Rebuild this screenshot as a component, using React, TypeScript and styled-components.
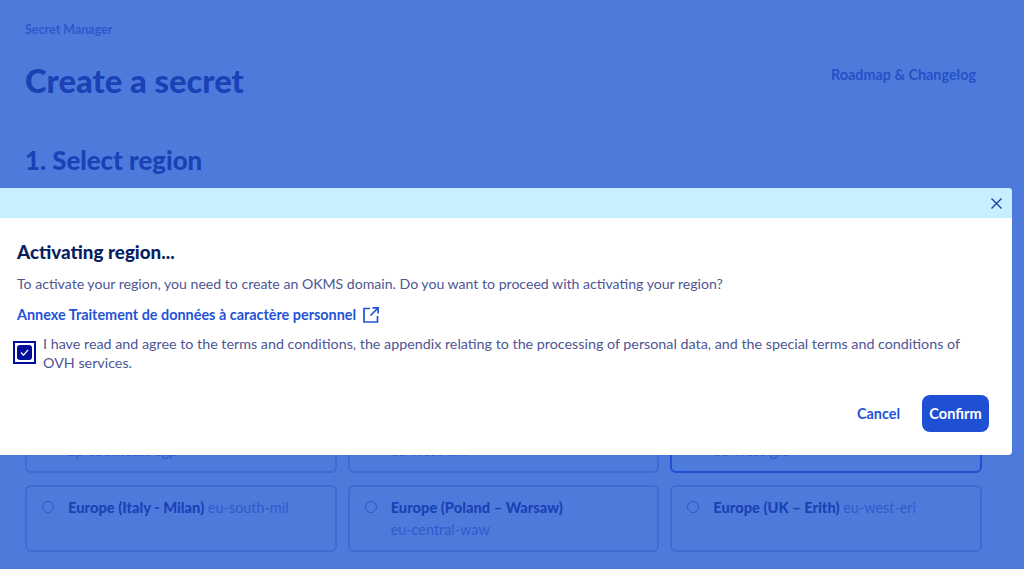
import React from "react";
import styled, { createGlobalStyle } from "styled-components";

const Global = createGlobalStyle`
  html, body { margin: 0; padding: 0; height: 100%; overflow: hidden; }
  body { background: #4e7bdb; font-family: Lato, "Noto Sans", sans-serif; }
  * { box-sizing: border-box; }
`;

const Page = styled.div`
  position: relative;
  width: 1024px;
  height: 569px;
  overflow: hidden;
  background: #4e7bdb;
`;

const Content = styled.main`
  display: flex;
  flex-direction: column;
  padding: 22px 42px 0 25px;
`;

const Breadcrumb = styled.div`
  font-size: 12.5px;
  line-height: 16px;
  font-weight: 700;
  color: #2c58cb;
`;

const TitleRow = styled.div`
  display: flex;
  justify-content: space-between;
  align-items: center;
  margin-top: 19px;
  height: 48px;
`;

const Title = styled.h1`
  margin: 0;
  font-size: 32.7px;
  line-height: 48px;
  font-weight: 900;
  color: #1b41b6;
`;

const TopLink = styled.a`
  font-size: 14.4px;
  font-weight: 700;
  color: #2650c8;
  margin: -14px 6px 0 0;
`;

const SectionTitle = styled.h2`
  margin: 39px 0 0;
  font-size: 25.8px;
  line-height: 32px;
  font-weight: 900;
  color: #1b41b6;
`;

const CardGrid = styled.div`
  display: grid;
  grid-template-columns: repeat(3, 1fr);
  grid-auto-rows: 67px;
  column-gap: 11px;
  row-gap: 12px;
  margin-top: 230px;
`;

const Card = styled.div<{ $selected?: boolean }>`
  display: grid;
  grid-template-columns: 13px 1fr;
  column-gap: 13px;
  align-content: start;
  padding: 9px 15px;
  border: 2px solid ${(p) => (p.$selected ? "#2050d6" : "#3f6bd2")};
  border-radius: 6px;
`;

const Radio = styled.span`
  width: 12px;
  height: 12px;
  margin-top: 5px;
  border: 1px solid #2c58cb;
  border-radius: 50%;
`;

const CardText = styled.div`
  font-size: 14.4px;
  line-height: 22px;
  color: #2f5acd;
`;

const CardName = styled.strong`
  font-size: 14.7px;
  font-weight: 900;
  color: #1b41b6;
`;

const Modal = styled.section`
  position: absolute;
  top: 188px;
  left: 0;
  width: 1012px;
  height: 267px;
  background: #fff;
  border-radius: 0 4px 4px 0;
  overflow: hidden;
  display: flex;
  flex-direction: column;
`;

const ModalBar = styled.header`
  flex: none;
  height: 30px;
  background: #c6f0ff;
  display: flex;
  justify-content: flex-end;
  align-items: center;
  padding: 0 9px 0 0;
`;

const CloseButton = styled.button`
  width: 13px;
  height: 13px;
  padding: 0;
  border: 0;
  background: none;
  color: #1c3fb0;
  display: flex;
`;

const ModalBody = styled.div`
  flex: 1;
  display: flex;
  flex-direction: column;
  padding: 22px 23px 0 17px;
`;

const ModalTitle = styled.h3`
  margin: 0;
  font-size: 18.8px;
  line-height: 24px;
  font-weight: 900;
  color: #0a1f63;
`;

const BodyText = styled.p`
  margin: 10px 0 0;
  font-size: 14.1px;
  line-height: 20px;
  color: #4d5693;
`;

const DocLink = styled.a`
  display: flex;
  align-items: center;
  gap: 7px;
  margin-top: 11px;
  font-size: 14.4px;
  line-height: 20px;
  font-weight: 700;
  color: #1f54d6;
`;

const CheckRow = styled.label`
  display: flex;
  align-items: center;
  gap: 7px;
  margin: 10px 0 0 -4px;
`;

const CheckOutline = styled.span`
  flex: none;
  width: 23px;
  height: 23px;
  margin-bottom: 2px;
  border: 2px solid #000e9c;
  padding: 2px;
  display: flex;
`;

const CheckBox = styled.span`
  flex: 1;
  border-radius: 3px;
  background: #000e9c;
  color: #fff;
  display: flex;
  align-items: center;
  justify-content: center;
`;

const CheckLabel = styled.span`
  font-size: 14.3px;
  line-height: 18.5px;
  color: #4d5693;
`;

const Actions = styled.footer`
  display: flex;
  justify-content: flex-end;
  align-items: center;
  gap: 22px;
  margin-top: 23px;
`;

const CancelButton = styled.button`
  padding: 0;
  border: 0;
  background: none;
  font-family: inherit;
  font-size: 14.4px;
  font-weight: 700;
  color: #1f54d6;
`;

const ConfirmButton = styled.button`
  width: 67px;
  height: 37px;
  padding: 0;
  border: 0;
  border-radius: 8px;
  background: #1f50d3;
  font-family: inherit;
  font-size: 14.6px;
  font-weight: 700;
  color: #fff;
`;

const regions = [
  { name: "Asia Pacific (Singapore)", id: "ap-southeast-sgp", wrap: true },
  { name: "Europe (France - Limburg)", id: "eu-west-lim", wrap: true },
  { name: "Europe (France - Gravelines)", id: "eu-west-gra", selected: true, wrap: true },
  { name: "Europe (Italy - Milan)", id: "eu-south-mil" },
  { name: "Europe (Poland – Warsaw)", id: "eu-central-waw", wrap: true },
  { name: "Europe (UK – Erith)", id: "eu-west-eri" },
];

export default function App() {
  return (
    <Page>
      <Global />
      <Content>
        <Breadcrumb>Secret Manager</Breadcrumb>
        <TitleRow>
          <Title>Create a secret</Title>
          <TopLink>Roadmap &amp; Changelog</TopLink>
        </TitleRow>
        <SectionTitle>1. Select region</SectionTitle>
        <CardGrid>
          {regions.map((r) => (
            <Card key={r.id} $selected={r.selected}>
              <Radio />
              <CardText>
                <CardName>{r.name}</CardName>
                {r.wrap ? <br /> : " "}
                {r.id}
              </CardText>
            </Card>
          ))}
        </CardGrid>
      </Content>
      <Modal>
        <ModalBar>
          <CloseButton aria-label="Close">
            <svg viewBox="0 0 13 13" width="13" height="13" fill="none" stroke="currentColor" strokeWidth="1.4">
              <path d="M1.5 1.5l10 10M11.5 1.5l-10 10" />
            </svg>
          </CloseButton>
        </ModalBar>
        <ModalBody>
          <ModalTitle>Activating region...</ModalTitle>
          <BodyText>
            To activate your region, you need to create an OKMS domain. Do you want to proceed with activating your region?
          </BodyText>
          <DocLink>
            Annexe Traitement de données à caractère personnel
            <svg viewBox="0 0 16 16" width="16" height="16" fill="none" stroke="currentColor" strokeWidth="1.7">
              <path d="M7 1.5H1v13.5h13.5V9M9.5 .9h5.6V6.5M15 1L7.5 8.5" />
            </svg>
          </DocLink>
          <CheckRow>
            <CheckOutline>
              <CheckBox>
                <svg viewBox="0 0 10 8" width="9" height="7" fill="none" stroke="currentColor" strokeWidth="1.5">
                  <path d="M1 4l3 3 5-6" />
                </svg>
              </CheckBox>
            </CheckOutline>
            <CheckLabel>
              I have read and agree to the terms and conditions, the appendix relating to the processing of personal data, and the special terms and conditions of OVH services.
            </CheckLabel>
          </CheckRow>
          <Actions>
            <CancelButton>Cancel</CancelButton>
            <ConfirmButton>Confirm</ConfirmButton>
          </Actions>
        </ModalBody>
      </Modal>
    </Page>
  );
}
